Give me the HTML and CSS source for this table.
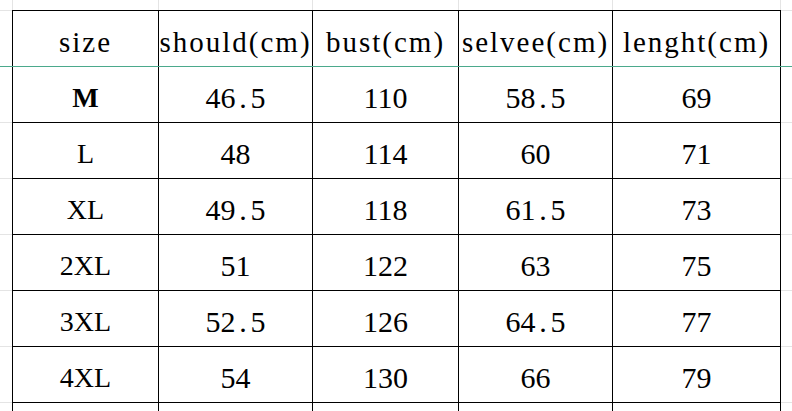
FILE: index.html
```html
<!DOCTYPE html>
<html>
<head>
<meta charset="utf-8">
<link rel="stylesheet" href="styles.css">
</head>
<body>
<div class="sheet">
  <table class="sizes">
    <colgroup>
      <col class="c1"><col class="c2"><col class="c3"><col class="c4"><col class="c5">
    </colgroup>
    <tr class="head">
      <td>size</td><td>should(cm)</td><td>bust(cm)</td><td>selvee(cm)</td><td>lenght(cm)</td>
    </tr>
    <tr><td class="lbl bold">M</td><td>46<span class="dot">.</span>5</td><td>110</td><td>58<span class="dot">.</span>5</td><td>69</td></tr>
    <tr><td class="lbl">L</td><td>48</td><td>114</td><td>60</td><td>71</td></tr>
    <tr><td class="lbl">XL</td><td>49<span class="dot">.</span>5</td><td>118</td><td>61<span class="dot">.</span>5</td><td>73</td></tr>
    <tr><td class="lbl">2XL</td><td>51</td><td>122</td><td>63</td><td>75</td></tr>
    <tr><td class="lbl">3XL</td><td>52<span class="dot">.</span>5</td><td>126</td><td>64<span class="dot">.</span>5</td><td>77</td></tr>
    <tr><td class="lbl">4XL</td><td>54</td><td>130</td><td>66</td><td>79</td></tr>
    <tr><td></td><td></td><td></td><td></td><td></td></tr>
  </table>
  <div class="freeze"></div>
</div>
</body>
</html>
```
FILE: styles.css
```css
html, body {
  margin: 0;
  padding: 0;
  background: #fff;
  overflow: hidden;
}
.sheet {
  position: relative;
  width: 792px;
  height: 411px;
  overflow: hidden;
  padding: 10px 0 0 12px;
  box-sizing: border-box;
  background-color: #fff;
  background-image:
    repeating-linear-gradient(to bottom, #e4e4e4 0 1px, transparent 1px 56px),
    linear-gradient(to right, transparent 0 12px, #e4e4e4 12px 13px, transparent 13px 158px, #e4e4e4 158px 159px, transparent 159px 312px, #e4e4e4 312px 313px, transparent 313px 458px, #e4e4e4 458px 459px, transparent 459px 612px, #e4e4e4 612px 613px, transparent 613px 780px, #e4e4e4 780px 781px, transparent 781px);
  background-position: 0 10px, 0 0;
}
.sizes {
  border-collapse: collapse;
  table-layout: fixed;
  width: 769px;
  background: #fff;
  color: #000;
  font-family: "Liberation Serif", "Times New Roman", serif;
  font-size: 30px;
}
.c1 { width: 146px; }
.c2 { width: 154px; }
.c3 { width: 146px; }
.c4 { width: 154px; }
.c5 { width: 168px; }
.sizes td {
  border: 1px solid #000;
  height: 56px;
  padding: 6px 0 0 0;
  box-sizing: border-box;
  text-align: center;
  vertical-align: middle;
  white-space: nowrap;
  overflow: hidden;
}
.head td {
  font-size: 29px;
  letter-spacing: 2px;
  padding: 8px 0 0 0;
}
.dot {
  display: inline-block;
  width: 0.5em;
  text-align: center;
}
.lbl {
  font-size: 28px;
}
.bold {
  font-weight: bold;
}
.freeze {
  position: absolute;
  left: 0;
  right: 0;
  top: 66px;
  height: 1px;
  background: #4ba98c;
}
```
